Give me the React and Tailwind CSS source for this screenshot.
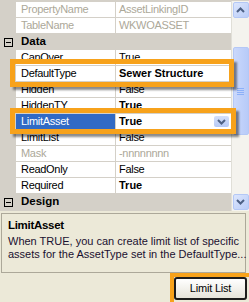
import React from "react";

const rows = [
  { n: "PropertyName", v: "AssetLinkingID", dim: true },
  { n: "TableName", v: "WKWOASSET", dim: true },
  { cat: "Data" },
  { n: "CanOver", v: "True" },
  { n: "DefaultType", v: "Sewer Structure", bold: true },
  { n: "Hidden", v: "False" },
  { n: "HiddenTY", v: "True", bold: true },
  { n: "LimitAsset", v: "True", bold: true, sel: true },
  { n: "LimitList", v: "False" },
  { n: "Mask", v: "-nnnnnnnn", dim: true },
  { n: "ReadOnly", v: "False" },
  { n: "Required", v: "True", bold: true },
  { cat: "Design" },
];

function Chevron({ up }) {
  return (
    <svg width="9" height="6" viewBox="0 0 9 6">
      <path
        d={up ? "M1 5 L4.5 1.5 L8 5" : "M1 1 L4.5 4.5 L8 1"}
        fill="none"
        stroke="#4D6185"
        strokeWidth="2"
      />
    </svg>
  );
}

function ScrollBtn({ up }) {
  return (
    <div className="h-[16px] w-[16px] rounded-[2px] border border-[#B4C8F6] bg-gradient-to-br from-[#DCE6FD] to-[#B9CCF7] flex items-center justify-center">
      <Chevron up={up} />
    </div>
  );
}

export default function App() {
  return (
    <div
      className="relative w-[249px] h-[302px] bg-[#ECE9D8] overflow-hidden text-[11px] leading-none text-black"
      style={{ fontFamily: '"Liberation Sans", Arial, sans-serif' }}
    >
      {/* grid */}
      <div className="flex h-[211px] bg-[#D4D0C8] pt-[2px]">
        <div className="flex-1 flex flex-col">
          {rows.map((r, i) =>
            r.cat ? (
              <div key={i} className="h-[16px] flex items-center bg-[#D4D0C8]">
                <div className="ml-[4px] w-[9px] h-[9px] border border-black flex items-center justify-center">
                  <div className="w-[5px] h-[1px] bg-black" />
                </div>
                <span className="ml-[8px] font-bold text-[11.5px]">{r.cat}</span>
              </div>
            ) : (
              <div key={i} className="h-[16px] flex">
                <div className="w-[16px] bg-[#D4D0C8]" />
                <div
                  className={
                    "w-[100px] flex items-center pl-[5px] border-b border-r border-[#D4D0C8] tracking-[-0.3px] " +
                    (r.sel ? "bg-[#316AC5] text-white" : "bg-white") +
                    (r.dim ? " text-[#ACA899]" : "")
                  }
                >
                  {r.n}
                </div>
                <div
                  className={
                    "flex-1 flex items-center pl-[3px] bg-white border-b border-[#D4D0C8] " +
                    (r.bold ? "font-bold" : "tracking-[-0.3px]") +
                    (r.dim ? " text-[#ACA899]" : "")
                  }
                >
                  <span className="flex-1">{r.v}</span>
                  {r.sel && (
                    <div className="mr-[2px] w-[15px] h-[11px] rounded-[2px] bg-gradient-to-b from-[#D4E0FB] to-[#B6C9F5] flex items-center justify-center">
                      <Chevron />
                    </div>
                  )}
                </div>
              </div>
            )
          )}
        </div>
        {/* scrollbar */}
        <div className="w-[18px] -mt-[1px] bg-[#F4F3EE] border-l border-[#E0DFD8] flex flex-col items-center pt-[1px] pb-[1px]">
          <ScrollBtn up />
          <div className="flex-1 w-full flex flex-col items-center">
            <div className="mt-[29px] h-[88px] w-[16px] rounded-[2px] border border-[#B4C8F6] bg-gradient-to-r from-[#CAD8FC] to-[#B8CBF8] flex flex-col items-center justify-center gap-[1px]">
              {[0, 1, 2, 3].map((k) => (
                <div key={k} className="w-[7px] h-[1px] bg-[#EEF4FE] border-b border-[#8CB0F8]" />
              ))}
            </div>
          </div>
          <ScrollBtn />
        </div>
      </div>

      {/* description */}
      <div className="mt-[2px] ml-[1px] w-[245px] h-[60px] border border-[#ACA899] px-[6px] pt-[6px]">
        <div className="font-bold tracking-[-0.3px] text-[11.5px]">LimitAsset</div>
        <div className="mt-[3px] whitespace-nowrap leading-[13px] text-[#1a1030]">
          When TRUE, you can create limit list of specific
          <br />
          assets for the AssetType set in the DefaultType...
        </div>
      </div>

      {/* button row */}
      <div className="flex justify-end pr-[2px] mt-[4px]">
        <button className="w-[73px] h-[23px] rounded-[3px] border-2 border-[#1C1C1C] bg-gradient-to-b from-[#FFFFFF] to-[#E6E4DA] text-[11px] tracking-[-0.2px]">
          Limit List
        </button>
      </div>

      {/* orange callouts */}
      <div className="absolute left-[10px] top-[59px] w-[224px] h-[28px] border-[5px] border-[#F7A21B] shadow-[3px_3px_2px_rgba(0,0,0,0.45)]" />
      <div className="absolute left-[10px] top-[108px] w-[226px] h-[26px] border-[5px] border-[#F7A21B] shadow-[3px_3px_2px_rgba(0,0,0,0.45)]" />
      <div className="absolute left-[170px] top-[273px] w-[84px] h-[34px] border-[4px] border-[#F7A21B]" />
    </div>
  );
}
